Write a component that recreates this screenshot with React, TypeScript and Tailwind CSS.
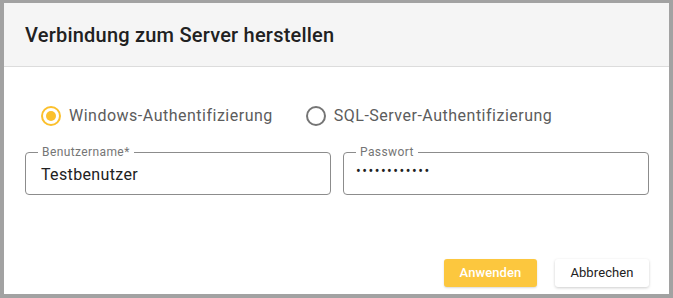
import React from "react";

function Radio({ checked, label }: { checked: boolean; label: string }) {
  return (
    <label className="flex items-center gap-[8px] cursor-pointer">
      <span
        className={
          checked
            ? "flex h-[20px] w-[20px] items-center justify-center rounded-full border-2 border-[#fbc02d]"
            : "flex h-[20px] w-[20px] items-center justify-center rounded-full border-2 border-[#757575]"
        }
      >
        {checked && <span className="h-[10px] w-[10px] rounded-full bg-[#fbc02d]" />}
      </span>
      <span className="text-[16px] leading-[20px] tracking-[0.5px] text-[#5c5c5c]">{label}</span>
    </label>
  );
}

function Field({ label, children }: { label: string; children: React.ReactNode }) {
  return (
    <fieldset className="flex-1 rounded-[4px] border border-[#8c8c8c] px-[15px] pt-[7px] pb-[10px]">
      <legend className="ml-[-3px] px-[4px] text-[12px] leading-[12px] tracking-[0.4px] text-[#757575]">
        {label}
      </legend>
      <div className="h-[19px] text-[16px] leading-[19px] tracking-[0.35px] text-[#212121]">{children}</div>
    </fieldset>
  );
}

export default function App() {
  return (
    <div
      className="h-[298px] w-[673px] bg-[#a2a2a2] pt-[3px] pl-[4px] pr-[4px] pb-[4px]"
      style={{ fontFamily: "Roboto, 'Noto Sans', sans-serif" }}
    >
      <div className="flex h-full flex-col bg-white">
        <div className="flex h-[64px] items-center border-b border-[#dcdcdc] bg-[#f5f5f5] px-[21px]">
          <h1 className="text-[20px] font-medium leading-[24px] tracking-[0.22px] text-[#212121]">
            Verbindung zum Server herstellen
          </h1>
        </div>
        <div className="flex flex-col px-[21px] pr-[20px]">
          <div className="mt-[39px] flex items-center gap-[33px] pl-[16px]">
            <Radio checked label="Windows-Authentifizierung" />
            <Radio checked={false} label="SQL-Server-Authentifizierung" />
          </div>
          <div className="mt-[20px] flex gap-[12px]">
            <Field label="Benutzername*">Testbenutzer</Field>
            <Field label="Passwort">
              <span className="ml-[-3px] inline-block translate-y-[-4px] text-[14px] tracking-[1.5px] text-[#212121]">
                ••••••••••••
              </span>
            </Field>
          </div>
        </div>
        <div className="flex-1" />
        <div className="flex justify-end gap-[18px] pr-[20px] pb-[7px]">
          <button className="h-[28px] w-[93px] rounded-[3px] bg-[#fcc73e] text-[13px] font-medium tracking-[0.1px] text-white shadow-[0_1px_2px_rgba(0,0,0,0.15)]">
            Anwenden
          </button>
          <button className="h-[28px] w-[94px] rounded-[3px] bg-white text-[13px] tracking-[0.1px] text-[#212121] shadow-[0_1px_3px_rgba(0,0,0,0.2)]">
            Abbrechen
          </button>
        </div>
      </div>
    </div>
  );
}
